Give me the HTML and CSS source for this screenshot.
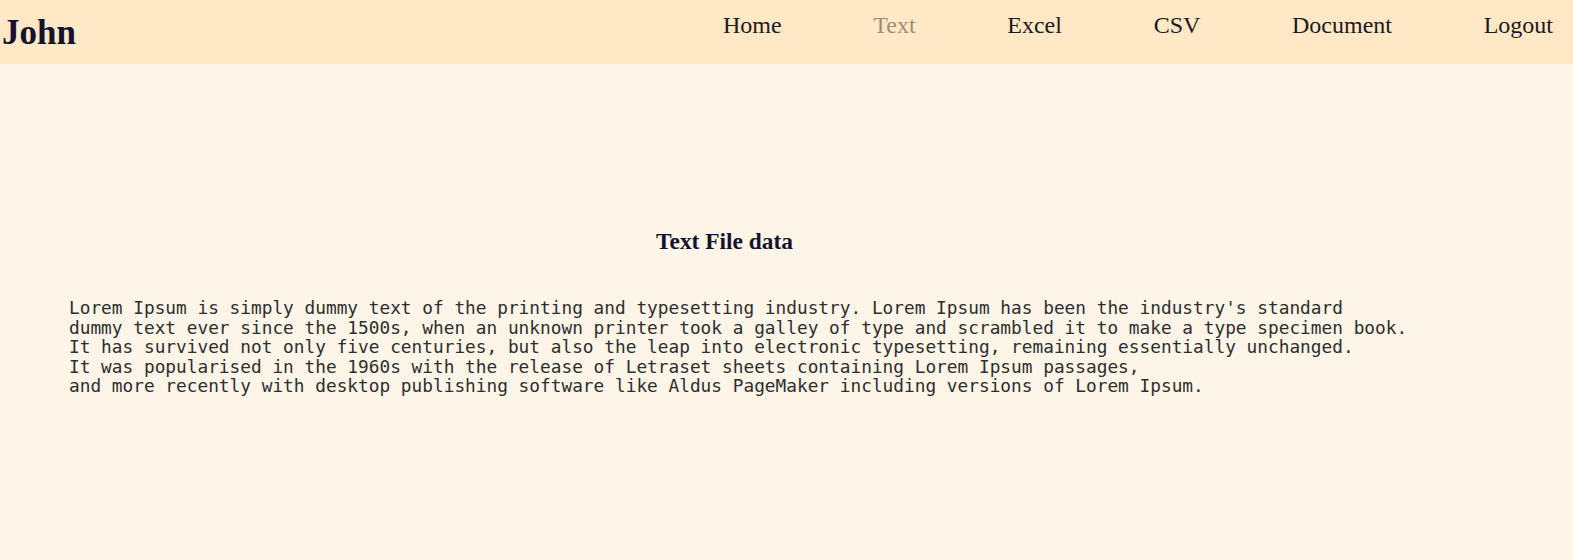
FILE: index.html
```html
<!DOCTYPE html>
<html>
<head>
<meta charset="utf-8">
<link rel="stylesheet" href="styles.css">
</head>
<body>
<header class="topbar">
  <div class="brand">John</div>
  <nav class="nav">
    <a class="nav-link" href="#">Home</a>
    <a class="nav-link active" href="#">Text</a>
    <a class="nav-link" href="#">Excel</a>
    <a class="nav-link" href="#">CSV</a>
    <a class="nav-link" href="#">Document</a>
    <a class="nav-link" href="#">Logout</a>
  </nav>
</header>
<main class="content">
  <h2 class="title">Text File data</h2>
<pre class="filedata">Lorem Ipsum is simply dummy text of the printing and typesetting industry. Lorem Ipsum has been the industry's standard
dummy text ever since the 1500s, when an unknown printer took a galley of type and scrambled it to make a type specimen book.
It has survived not only five centuries, but also the leap into electronic typesetting, remaining essentially unchanged.
It was popularised in the 1960s with the release of Letraset sheets containing Lorem Ipsum passages,
and more recently with desktop publishing software like Aldus PageMaker including versions of Lorem Ipsum.</pre>
</main>
</body>
</html>
```
FILE: styles.css
```css
html, body {
  margin: 0;
  padding: 0;
  background: #fdf5e7;
  height: 100%;
}
body {
  font-family: "Liberation Serif", "Times New Roman", serif;
}
.topbar {
  height: 64px;
  background: #ffe8c6;
  display: flex;
  align-items: flex-start;
  justify-content: space-between;
  padding: 0 20px 0 2px;
}
.brand {
  font-size: 35px;
  font-weight: bold;
  color: #14132f;
  line-height: 1;
  margin-top: 15px;
}
.nav {
  display: flex;
  gap: 91.7px;
  margin-top: 11px;
}
.nav-link {
  font-size: 24px;
  color: #1d1a20;
  text-decoration: none;
  line-height: 28px;
}
.nav-link.active {
  color: #a18d76;
}
.content {
  width: 1311px;
  margin-left: 69px;
  padding-top: 163px;
}
.title {
  text-align: center;
  font-size: 23.4px;
  font-weight: bold;
  color: #14132f;
  margin: 0;
  line-height: 28px;
}
.filedata {
  margin: 43px 0 0;
  font-family: "DejaVu Sans Mono", "Liberation Mono", monospace;
  font-size: 17.8px;
  line-height: 19.5px;
  color: #2e2e2e;
  white-space: pre;
}
```
